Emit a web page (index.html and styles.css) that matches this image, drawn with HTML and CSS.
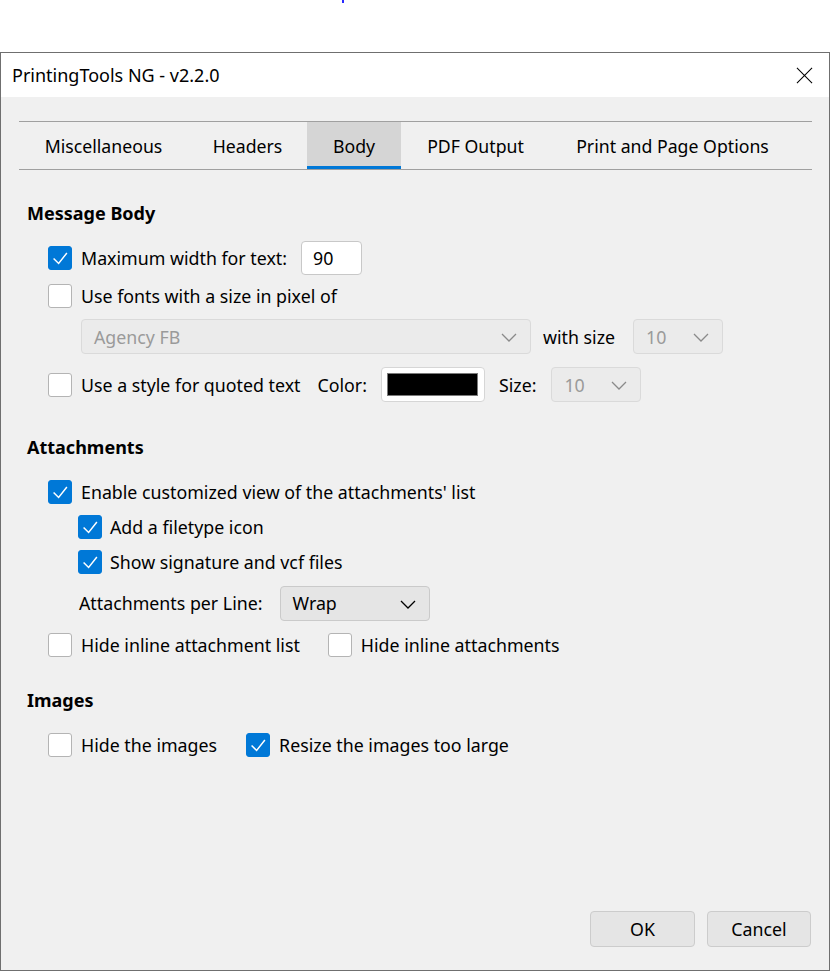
FILE: index.html
```html
<!DOCTYPE html>
<html>
<head>
<meta charset="utf-8">
<title>PrintingTools NG - v2.2.0</title>
<link rel="stylesheet" href="styles.css">
</head>
<body>
<div class="dot"></div>
<div class="window">
  <div class="titlebar">
    <span class="title">PrintingTools NG - v2.2.0</span>
    <svg class="close" width="18" height="18" viewBox="0 0 18 18"><path d="M1 1 L17 17 M17 1 L1 17" stroke="#000" stroke-width="1.1" fill="none"/></svg>
  </div>
  <div class="content">
    <div class="tabs">
      <div class="tab t1">Miscellaneous</div>
      <div class="tab t2">Headers</div>
      <div class="tab t3 active">Body</div>
      <div class="tab t4">PDF Output</div>
      <div class="tab t5">Print and Page Options</div>
    </div>

    <div class="panel">
      <h2 class="heading h-msg">Message Body</h2>
      <div class="row r1">
        <span class="cb on"><svg viewBox="0 0 24 24"><path d="M5 12.5 L10.5 18 L19.5 6.5"/></svg></span>
        <span class="label">Maximum width for text:</span>
        <span class="textbox">90</span>
      </div>
      <div class="row r2">
        <span class="cb"></span>
        <span class="label">Use fonts with a size in pixel of</span>
      </div>
      <div class="row r3">
        <span class="select disabled font-sel">Agency FB<svg class="chev" viewBox="0 0 16 9"><path d="M1 1 L8 8 L15 1"/></svg></span>
        <span class="label">with size</span>
        <span class="select disabled size-sel">10<svg class="chev" viewBox="0 0 16 9"><path d="M1 1 L8 8 L15 1"/></svg></span>
      </div>
      <div class="row r4">
        <span class="cb"></span>
        <span class="label">Use a style for quoted text</span>
        <span class="label color-lbl">Color:</span>
        <span class="colorbtn"><span class="swatch"></span></span>
        <span class="label size-lbl">Size:</span>
        <span class="select disabled size-sel">10<svg class="chev" viewBox="0 0 16 9"><path d="M1 1 L8 8 L15 1"/></svg></span>
      </div>

      <h2 class="heading h-att">Attachments</h2>
      <div class="row r5">
        <span class="cb on"><svg viewBox="0 0 24 24"><path d="M5 12.5 L10.5 18 L19.5 6.5"/></svg></span>
        <span class="label">Enable customized view of the attachments' list</span>
      </div>
      <div class="row sub r6">
        <span class="cb on"><svg viewBox="0 0 24 24"><path d="M5 12.5 L10.5 18 L19.5 6.5"/></svg></span>
        <span class="label">Add a filetype icon</span>
      </div>
      <div class="row sub r7">
        <span class="cb on"><svg viewBox="0 0 24 24"><path d="M5 12.5 L10.5 18 L19.5 6.5"/></svg></span>
        <span class="label">Show signature and vcf files</span>
      </div>
      <div class="row perline r8">
        <span class="label">Attachments per Line:</span>
        <span class="select wrap-sel">Wrap<svg class="chev dark" viewBox="0 0 16 9"><path d="M1 1 L8 8 L15 1"/></svg></span>
      </div>
      <div class="row r9">
        <span class="cb"></span>
        <span class="label">Hide inline attachment list</span>
        <span class="cb second"></span>
        <span class="label">Hide inline attachments</span>
      </div>

      <h2 class="heading h-img">Images</h2>
      <div class="row r10">
        <span class="cb"></span>
        <span class="label">Hide the images</span>
        <span class="cb third on"><svg viewBox="0 0 24 24"><path d="M5 12.5 L10.5 18 L19.5 6.5"/></svg></span>
        <span class="label">Resize the images too large</span>
      </div>
    </div>

    <div class="footer">
      <button class="btn ok">OK</button>
      <button class="btn cancel">Cancel</button>
    </div>
  </div>
</div>
</body>
</html>
```

FILE: styles.css
```css
* { box-sizing: border-box; }
html, body { margin: 0; padding: 0; background: #ffffff; }
body {
  position: relative;
  width: 830px;
  height: 972px;
  overflow: hidden;
  font-family: "Noto Sans", "Open Sans", sans-serif;
  font-size: 17.8px;
  color: #000;
}
.dot {
  position: absolute;
  left: 342px;
  top: 0;
  width: 2px;
  height: 3px;
  background: #2a2aff;
}
.window {
  margin-top: 52px;
  width: 830px;
  height: 919px;
  border: 1px solid #6f6f6f;
  background: #f0f0f0;
  display: flex;
  flex-direction: column;
}
.titlebar {
  height: 44px;
  background: #ffffff;
  display: flex;
  align-items: center;
  justify-content: space-between;
  padding: 0 16px 0 11px;
  flex: none;
}
.title { font-size: 18px; }
.close { width: 17px; height: 17px; }

.content {
  flex: 1;
  display: flex;
  flex-direction: column;
  padding: 24px 18px 23px 18px;
}
.tabs {
  display: flex;
  height: 49px;
  border-top: 1px solid #a0a0a0;
  border-bottom: 1px solid #a0a0a0;
  width: 793px;
}
.tab {
  display: flex;
  align-items: center;
  justify-content: center;
  height: 47px;
  font-size: 17.7px;
}
.t1 { width: 169px; }
.t2 { width: 119px; }
.t3 { width: 94px; }
.t4 { width: 149px; }
.t5 { width: 245px; }
.tab.active {
  background: #d5d5d5;
  border-bottom: 3px solid #0078d7;
  padding-top: 3px;
}

.panel {
  padding-left: 8px;
  display: flex;
  flex-direction: column;
}
.heading {
  margin: 0;
  font-size: 18px;
  font-weight: bold;
  height: 24px;
  line-height: 24px;
}
.h-msg { margin-top: 31px; }
.h-att { margin-top: 33px; }
.h-img { margin-top: 31px; }

.row {
  display: flex;
  align-items: center;
  padding-left: 21px;
  height: 24px;
}
.row .label { white-space: nowrap; }
.cb {
  width: 24px;
  height: 24px;
  flex: none;
  border: 1px solid #b4b4b4;
  border-radius: 3px;
  background: #ffffff;
  margin-right: 9px;
  display: flex;
}
.cb.on {
  background: #0078d7;
  border-color: #0078d7;
}
.cb svg { width: 22px; height: 22px; }
.cb svg path { fill: none; stroke: #fff; stroke-width: 1.6; }

.r1 { height: 34px; margin-top: 16px; }
.r2 { margin-top: 9px; }
.r3 { height: 35px; margin-top: 11px; padding-left: 54px; }
.r4 { height: 35px; margin-top: 13px; }
.r5 { margin-top: 21px; }
.sub { padding-left: 51px; margin-top: 11px; }
.sub .cb { margin-right: 8px; }
.perline { height: 34px; margin-top: 12px; padding-left: 52px; }
.r9 { margin-top: 13px; }
.r10 { margin-top: 21px; }

.textbox {
  margin-left: 14px;
  width: 61px;
  height: 34px;
  background: #fff;
  border: 1px solid #c8c8c8;
  border-radius: 4px;
  display: flex;
  align-items: center;
  padding-left: 11px;
}
.select {
  position: relative;
  display: flex;
  align-items: center;
  height: 35px;
  border-radius: 4px;
  padding-left: 12px;
}
.select.disabled {
  background: #ebebeb;
  border: 1px solid #dadada;
  color: #9a9a9a;
}
.font-sel { width: 450px; margin-right: 12px; }
.size-sel { width: 90px; }
.r3 .size-sel { margin-left: 18px; }
.color-lbl { margin-left: 17px; }
.colorbtn {
  margin-left: 14px;
  width: 104px;
  height: 35px;
  background: #fff;
  border: 1px solid #d6d6d6;
  border-radius: 4px;
  display: flex;
  align-items: center;
  justify-content: center;
}
.swatch {
  width: 91px;
  height: 23px;
  background: #000;
  border: 1px solid #7a7a7a;
}
.size-lbl { margin-left: 14px; margin-right: 15px; }
.wrap-sel {
  margin-left: 17px;
  width: 150px;
  height: 35px;
  background: #e5e5e5;
  border: 1px solid #cacaca;
}
.chev {
  position: absolute;
  right: 13px;
  top: 13px;
  width: 16px;
  height: 9px;
}
.chev path { fill: none; stroke: #8a8a8a; stroke-width: 1.3; }
.chev.dark path { stroke: #000; }
.cb.second { margin-left: 28px; }
.cb.third { margin-left: 29px; }

.footer {
  margin-top: auto;
  display: flex;
  justify-content: flex-end;
  gap: 12px;
}
.btn {
  font-family: "Noto Sans", "Open Sans", sans-serif;
  font-size: 17.8px;
  height: 36px;
  background: #e5e5e5;
  border: 1px solid #cccccc;
  border-radius: 4px;
  color: #000;
  padding: 0;
}
.ok { width: 105px; }
.cancel { width: 104px; }
```
